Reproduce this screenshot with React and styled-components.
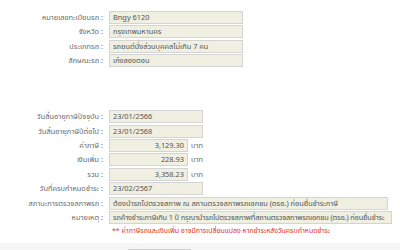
import styled, { createGlobalStyle } from "styled-components";

const Global = createGlobalStyle`
  body {
    margin: 0;
    background: #ffffff;
    font-family: Tahoma, "Noto Sans Thai", "DejaVu Sans", sans-serif;
  }
`;

const Page = styled.div`
  width: 400px;
  height: 250px;
  overflow: hidden;
  display: flex;
  flex-direction: column;
`;

const Section = styled.div`
  display: flex;
  flex-direction: column;
  gap: 1.4px;
  padding-top: ${(p) => p.$top}px;
`;

const Row = styled.div`
  display: flex;
  align-items: center;
  height: 13px;
`;

const Label = styled.div`
  width: 106px;
  text-align: right;
  font-size: 7.4px;
  color: #6a6a6a;
  white-space: nowrap;
  padding-right: 3px;
  box-sizing: border-box;
`;

const Field = styled.div`
  box-sizing: border-box;
  width: ${(p) => p.$w}px;
  height: 13px;
  margin-left: 3px;
  background: #efefe2;
  border: 1px solid #d4d4d4;
  font-size: 7.4px;
  line-height: 11px;
  color: #555;
  padding: 0 3px;
  text-align: ${(p) => (p.$num ? "right" : "left")};
  white-space: nowrap;
  overflow: hidden;
  letter-spacing: ${(p) => (p.$tight ? "-0.15px" : "0")};
`;

const Unit = styled.span`
  font-size: 7.4px;
  color: #6a6a6a;
  margin-left: 3px;
`;

const Note = styled.div`
  margin-left: 112px;
  font-size: 7px;
  color: #e03030;
  height: 13px;
  line-height: 13px;
`;

const Footer = styled.div`
  margin-top: 5px;
  flex: 1;
  background: #f6f6f6;
  display: flex;
  padding: 6px 0 0 128px;
`;

const Button = styled.div`
  height: 14px;
  padding: 0 8px;
  border: 1px solid #cfcfcf;
  background: #fbfbfb;
  font-size: 7px;
  color: #555;
  display: flex;
  align-items: center;
  gap: 3px;
`;

const top = [
  ["หมายเลขทะเบียนรถ :", "Bngy 6120"],
  ["จังหวัด :", "กรุงเทพมหานคร"],
  ["ประเภทรถ :", "รถยนต์นั่งส่วนบุคคลไม่เกิน 7 คน"],
  ["ลักษณะรถ :", "เก๋งสองตอน"],
];

export default function App() {
  return (
    <Page>
      <Global />
      <Section $top={11}>
        {top.map(([l, v]) => (
          <Row key={l}>
            <Label>{l}</Label>
            <Field $w={134}>{v}</Field>
          </Row>
        ))}
      </Section>
      <Section $top={43}>
        <Row>
          <Label>วันสิ้นอายุภาษีปัจจุบัน :</Label>
          <Field $w={94}>23/01/2566</Field>
        </Row>
        <Row>
          <Label>วันสิ้นอายุภาษีปีต่อไป :</Label>
          <Field $w={94}>23/01/2568</Field>
        </Row>
        <Row>
          <Label>ค่าภาษี :</Label>
          <Field $w={79} $num>3,129.30</Field>
          <Unit>บาท</Unit>
        </Row>
        <Row>
          <Label>เงินเพิ่ม :</Label>
          <Field $w={79} $num>228.93</Field>
          <Unit>บาท</Unit>
        </Row>
        <Row>
          <Label>รวม :</Label>
          <Field $w={79} $num>3,358.23</Field>
          <Unit>บาท</Unit>
        </Row>
        <Row>
          <Label>วันที่ครบกำหนดชำระ :</Label>
          <Field $w={94}>23/02/2567</Field>
        </Row>
        <Row>
          <Label>สถานะการตรวจสภาพรถ :</Label>
          <Field $w={279}>ต้องนำรถไปตรวจสภาพ ณ สถานตรวจสภาพรถเอกชน (ตรอ.) ก่อนยื่นชำระภาษี</Field>
        </Row>
        <Row>
          <Label>หมายเหตุ :</Label>
          <Field $w={283} $tight>รถค้างชำระภาษีเกิน 1 ปี กรุณานำรถไปตรวจสภาพที่สถานตรวจสภาพรถเอกชน (ตรอ.) ก่อนยื่นชำระ</Field>
        </Row>
        <Note>** ค่าภาษีรถและเงินเพิ่ม อาจมีการเปลี่ยนแปลง หากชำระหลังวันครบกำหนดชำระ</Note>
      </Section>
      <Footer>
        <Button>
          <svg width="7" height="7" viewBox="0 0 10 10">
            <path d="M5 1 L9 5 L5 9 L1 5 Z" fill="#8a3fa0" />
          </svg>
          กลับหน้าแรก
        </Button>
      </Footer>
    </Page>
  );
}
